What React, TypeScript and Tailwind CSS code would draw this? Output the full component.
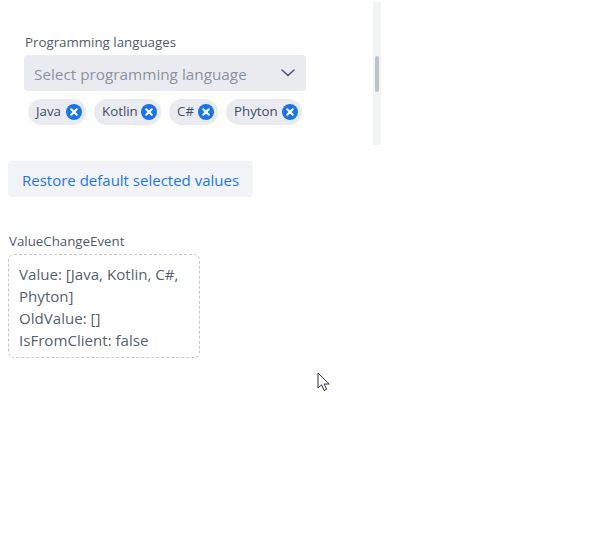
import React from "react";

const chips = [
  { label: "Java", width: "w-[58px]" },
  { label: "Kotlin", width: "w-[67px]" },
  { label: "C#", width: "w-[49px]" },
  { label: "Phyton", width: "w-[76px]" },
];

function RemoveIcon() {
  return (
    <svg width="16" height="16" viewBox="0 0 16 16" className="shrink-0">
      <circle cx="8" cy="8" r="8" fill="#1a73e8" />
      <path d="M5.2 5.2l5.6 5.6M10.8 5.2l-5.6 5.6" stroke="#fff" strokeWidth="2" strokeLinecap="round" />
    </svg>
  );
}

export default function App() {
  return (
    <div className="relative h-[540px] w-[600px] overflow-hidden bg-white font-['Open_Sans','Noto_Sans',sans-serif] text-[#4a5568]">
      <div className="flex h-[145px] w-[381px] pt-[2px]">
        <div className="flex-1 pl-6 pt-[32px]">
          <div className="ml-[1px] text-[13.3px] leading-[17px] text-[#4f5b6b]">Programming languages</div>
          <div className="mt-[4px] flex h-9 w-[282px] items-center justify-between rounded bg-[#e9ebf0] pl-[10px] pr-[11px]">
            <span className="pt-[3px] text-[15.3px] text-[#8a929e]">Select programming language</span>
            <svg width="14" height="8" viewBox="0 0 14 8" fill="none">
              <path d="M1 1l6 5.5L13 1" stroke="#4a5578" strokeWidth="1.6" strokeLinecap="round" strokeLinejoin="round" />
            </svg>
          </div>
          <div className="ml-1 mt-2 flex gap-2">
            {chips.map((chip) => (
              <div key={chip.label} className={`flex h-[26px] items-center justify-between rounded-full bg-[#e9ebf0] pl-2 pr-1 text-[13.3px] text-[#3f4d66] ${chip.width}`}>
                <span className="pb-[1px]">{chip.label}</span>
                <RemoveIcon />
              </div>
            ))}
          </div>
        </div>
        <div className="flex w-2 flex-col items-center bg-[#f2f3f5] pt-[54px]">
          <div className="h-9 w-1 rounded-full bg-[#bcc3cb]" />
        </div>
      </div>
      <button className="ml-2 mt-4 h-9 w-[245px] rounded bg-[#f2f3f6] pl-[14px] pt-[3px] text-left text-[15px] text-[#1a75ee]">
        Restore default selected values
      </button>
      <div className="ml-[9px] mt-[36px] text-[13.3px] leading-[17px] text-[#4f5b6b]">ValueChangeEvent</div>
      <div className="ml-2 mt-1 w-[192px] rounded-md border border-dashed border-[#c4c7cc] pb-[6px] pl-[10px] pr-2 pt-[8px] text-[15.1px] leading-[22px] text-[#555f6d]">
        Value: [Java, Kotlin, C#, Phyton]
        <br />
        OldValue: []
        <br />
        IsFromClient: false
      </div>
      <svg width="14" height="20" viewBox="0 0 14 20" className="absolute left-[317px] top-[372px]">
        <path d="M1 1v15l3.6-3.2L7 18.5l2.6-1.2-2.4-5.3h5L1 1z" fill="#fff" stroke="#2a3040" strokeWidth="1" strokeLinejoin="round" />
      </svg>
    </div>
  );
}
